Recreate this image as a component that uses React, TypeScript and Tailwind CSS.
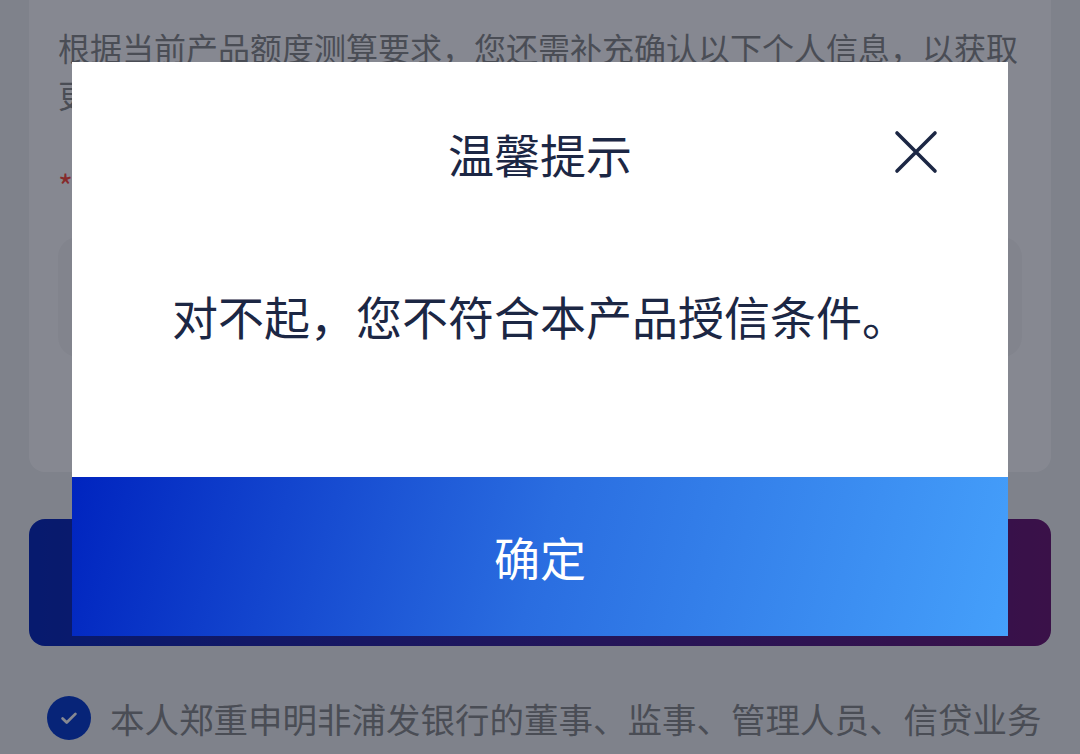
import React from 'react';

const font = { fontFamily: '"Noto Sans CJK SC", "Noto Sans", sans-serif' };

const App: React.FC = () => {
  return (
    <div className="relative h-[754px] w-[1080px] overflow-hidden bg-[#f1f3f3]" style={font}>
      {/* page underneath */}
      <div className="mx-[29px] rounded-b-2xl bg-white px-[29px] pb-[115px] pt-[24px]">
        <p className="text-[32px] leading-[47px] text-[#878987]">
          根据当前产品额度测算要求，您还需补充确认以下个人信息，以获取更高的授信额度。
        </p>
        <div className="mt-[44px] flex h-[46px] items-center gap-2 text-[32px]">
          <span className="text-[#ff4433]">*</span>
          <span className="text-[#333]">您的职业</span>
        </div>
        <div className="mt-[29px] h-[120px] rounded-[20px] bg-[#f7f7f7]" />
      </div>

      <div className="mx-[29px] mt-[47px] h-[127px] rounded-2xl bg-[linear-gradient(90deg,#0023b9,#67106d)]" />

      <div className="mt-[46px] flex items-start gap-[19px] pl-[47px] pr-[20px]">
        <div className="mt-[4px] flex h-[44px] w-[44px] shrink-0 items-center justify-center rounded-full bg-[#0037cd]">
          <svg width="22" height="22" viewBox="0 0 24 24" fill="none" stroke="white" strokeWidth="3" strokeLinecap="round" strokeLinejoin="round">
            <path d="M5 12.5l4.5 4.5L19 7.5" />
          </svg>
        </div>
        <p className="text-[34.5px] leading-[52px] text-[#878987]">
          本人郑重申明非浦发银行的董事、监事、管理人员、信贷业务人员及其近亲属。
        </p>
      </div>

      {/* overlay + dialog */}
      <div className="absolute inset-0 flex items-start justify-center bg-[rgba(13,17,35,0.5)] pt-[62px]">
        <div className="w-[936px]">
          <div className="h-[415px] bg-white pt-[61px]">
            <div className="relative flex h-[60px] items-center justify-center">
              <span className="text-[46px] leading-[60px] text-[#1c2744]">温馨提示</span>
              <svg
                className="absolute right-[70px] top-[7px]"
                width="44"
                height="44"
                viewBox="0 0 44 44"
                fill="none"
                stroke="#1c2744"
                strokeWidth="3.6"
                strokeLinecap="round"
              >
                <path d="M3 3L41 41M41 3L3 41" />
              </svg>
            </div>
            <div className="mt-[102px] text-center text-[46px] leading-[60px] text-[#1c2744]">
              对不起，您不符合本产品授信条件。
            </div>
          </div>
          <div className="flex h-[159px] items-center justify-center bg-[linear-gradient(105deg,#0024bf_0%,#2a6de0_50%,#45a0fb_100%)] text-[46px] text-white">
            确定
          </div>
        </div>
      </div>
    </div>
  );
};

export default App;
